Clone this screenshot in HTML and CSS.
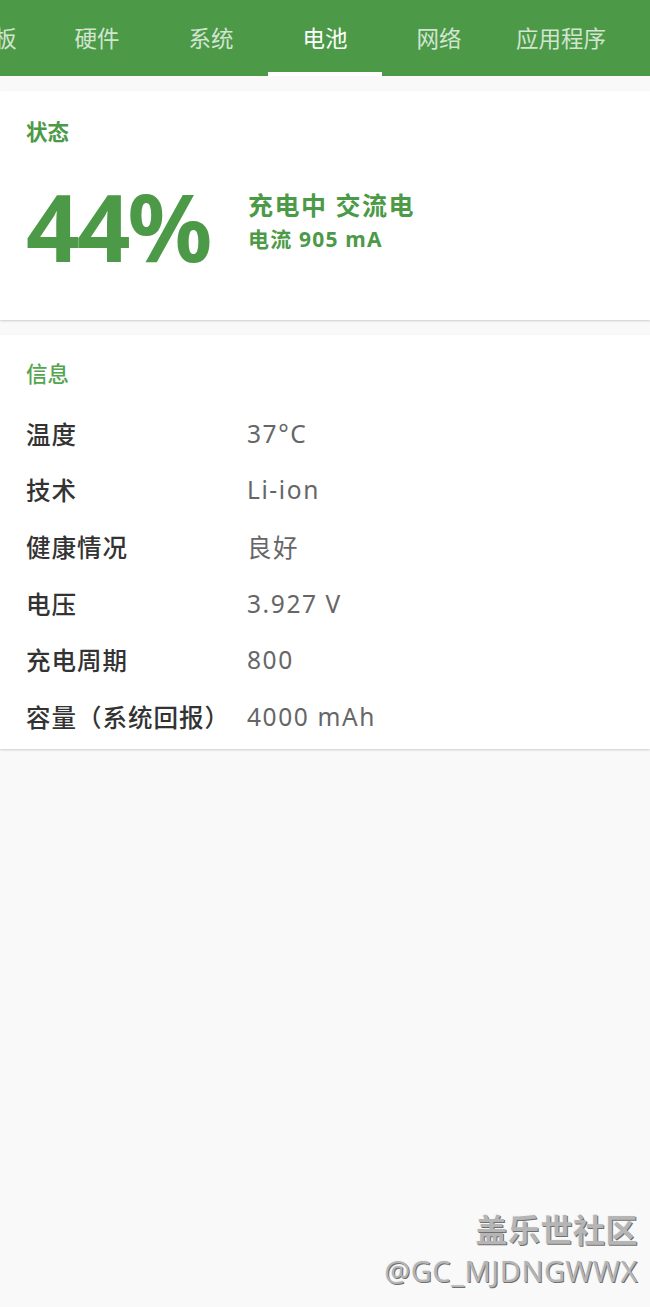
FILE: index.html
```html
<!DOCTYPE html>
<html lang="zh-CN">

<head>
    <meta charset="UTF-8">
    <meta name="viewport" content="width=device-width, initial-scale=1.0">
    <title>电池</title>
    <link rel="stylesheet" href="styles.css">
</head>

<body>
    <header class="tabs">
        <div class="tab-row">
            <span class="tab tab-first">仪表板</span>
            <span class="tab">硬件</span>
            <span class="tab">系统</span>
            <span class="tab active">电池</span>
            <span class="tab">网络</span>
            <span class="tab tab-wide">应用程序</span>
        </div>
    </header>

    <main class="content">
        <section class="card status">
            <h2 class="card-title">状态</h2>
            <div class="status-body">
                <div class="level">44%</div>
                <div class="charge">
                    <div class="charge-state">充电中 交流电</div>
                    <div class="charge-current">电流 905 mA</div>
                </div>
            </div>
        </section>

        <section class="card info">
            <h2 class="card-title">信息</h2>
            <div class="row"><span class="label">温度</span><span class="value">37°C</span></div>
            <div class="row"><span class="label">技术</span><span class="value">Li-ion</span></div>
            <div class="row"><span class="label">健康情况</span><span class="value">良好</span></div>
            <div class="row"><span class="label">电压</span><span class="value">3.927 V</span></div>
            <div class="row"><span class="label">充电周期</span><span class="value">800</span></div>
            <div class="row"><span class="label">容量（系统回报）</span><span class="value">4000 mAh</span></div>
        </section>
    </main>

    <div class="watermark">
        <div class="wm-title">盖乐世社区</div>
        <div class="wm-user">@GC_MJDNGWWX</div>
    </div>
</body>

</html>
```

FILE: styles.css
```css
body {
    margin: 0;
    background-color: #f9f9f9;
    font-family: "Noto Sans", "Noto Sans CJK SC", sans-serif;
    height: 1307px;
    position: relative;
    overflow: hidden;
}

.tabs {
    background-color: #4c9a47;
    height: 76px;
    overflow: hidden;
}

.tab-row {
    display: flex;
    margin-left: -74px;
    height: 76px;
}

.tab {
    flex: 0 0 114px;
    box-sizing: border-box;
    display: flex;
    align-items: center;
    justify-content: center;
    padding-top: 3px;
    font-size: 22.5px;
    white-space: nowrap;
    color: rgba(255, 255, 255, 0.75);
    border-bottom: 4px solid transparent;
}

.tab-wide {
    flex-basis: 130px;
}

.tab.active {
    color: #ffffff;
    border-bottom-color: #ffffff;
}

.content {
    padding-top: 15px;
    display: flex;
    flex-direction: column;
    gap: 15px;
}

.card {
    background-color: #ffffff;
    box-shadow: 0 1px 2px rgba(0, 0, 0, 0.18);
    padding: 0 26px;
}

.card-title {
    margin: 0;
    font-size: 21.5px;
    font-weight: 600;
    color: #4c9a47;
    line-height: 30px;
}

.status {
    padding-top: 26px;
    height: 203px;
}

.status-body {
    display: flex;
    align-items: center;
    margin-top: 24px;
}

.level {
    font-size: 94px;
    font-weight: 700;
    color: #4c9a47;
    letter-spacing: -3px;
    line-height: 110px;
    width: 222px;
}

.charge {
    color: #4c9a47;
    font-weight: 700;
    margin-top: -10px;
}

.charge-state {
    font-size: 25px;
    line-height: 36px;
    letter-spacing: 1.5px;
}

.charge-current {
    font-size: 21px;
    line-height: 32px;
    letter-spacing: 1.2px;
}

.info {
    padding-top: 24px;
    padding-bottom: 4px;
}

.info .card-title {
    font-weight: 500;
    color: #55a550;
    margin-bottom: 16px;
}

.row {
    display: flex;
    align-items: center;
    height: 56.6px;
    font-size: 24.5px;
}

.label {
    width: 221px;
    color: #333333;
    font-weight: 500;
    white-space: nowrap;
    letter-spacing: 1px;
}

.value {
    color: #666666;
    letter-spacing: 1.6px;
}

.watermark {
    position: absolute;
    right: 12px;
    bottom: 16px;
    text-align: right;
    color: #b5b5b5;
    text-shadow: 1px 1px 0 #6f6f6f, -1px -1px 0 #f4f4f4;
}

.wm-title {
    font-size: 32px;
    font-weight: 700;
    line-height: 42px;
    letter-spacing: 0.5px;
}

.wm-user {
    font-size: 29px;
    line-height: 40px;
    letter-spacing: 0.5px;
}
```
